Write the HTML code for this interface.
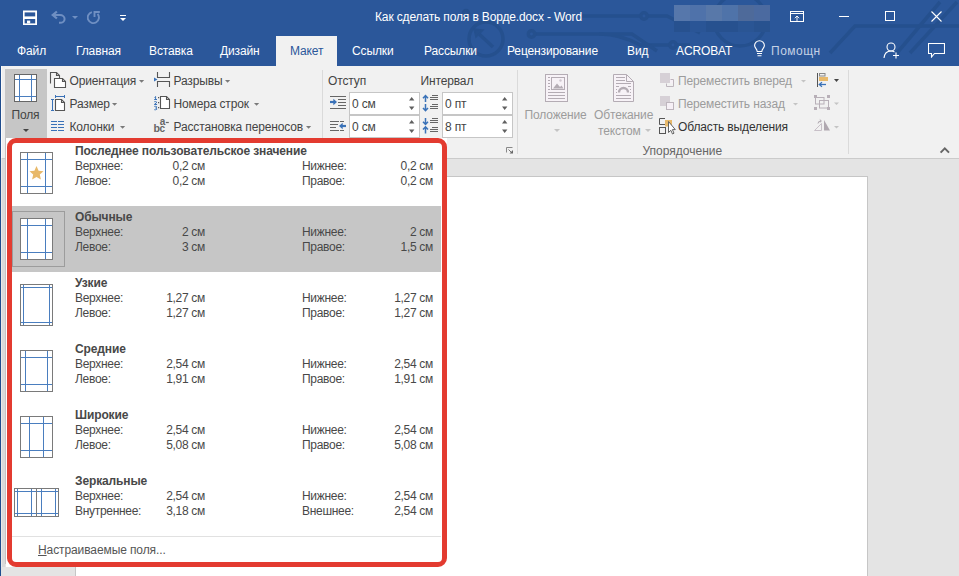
<!DOCTYPE html>
<html><head><meta charset="utf-8">
<style>
*{margin:0;padding:0;box-sizing:border-box}
html,body{width:959px;height:576px;overflow:hidden;background:#e4e4e4;font-family:"Liberation Sans",sans-serif;position:relative}
.a{position:absolute;white-space:nowrap}
#top{position:absolute;left:0;top:0;width:959px;height:66px;background:#2b579a;overflow:hidden}
.tt{position:absolute;color:#fff;font-size:12px;letter-spacing:-0.12px;top:44px;line-height:14px}
#ribbon{position:absolute;left:0;top:66px;width:959px;height:93px;background:#f1f1f1;border-bottom:1px solid #cbcbcb}
.rt{position:absolute;color:#444;font-size:12px;letter-spacing:-0.14px;line-height:14px;white-space:nowrap}
.dis{color:#9c9c9c}
.sep{position:absolute;width:1px;background:#dadada;top:70px;height:84px}
.arr{position:absolute;width:0;height:0;border-left:3px solid transparent;border-right:3px solid transparent;border-top:3px solid #666}
#page{position:absolute;left:75px;top:176px;width:793px;height:420px;background:#fff;border:1px solid #c6c6c6}
#dd{position:absolute;left:6px;top:138px;width:441px;height:429px;background:#fff;border:5px solid #e33b30;border-radius:9px;box-shadow:-1px 0 0 #cfcfcf}
.it{position:absolute;left:0;width:429px;height:66px}
.hl{background:#c6c6c6}
.dt{position:absolute;font-size:12px;letter-spacing:-0.3px;color:#484848;line-height:14px;white-space:nowrap}
.db{font-weight:bold;letter-spacing:-0.13px}
.sp{position:absolute;background:#fff;border:1px solid #c6c6c6}
</style></head><body>

<div id="top">
  <svg class="a" style="left:0;top:0" width="959" height="66">
    <g stroke="#25508e" stroke-width="3.5" fill="none">
      <circle cx="486" cy="39" r="17"/>
      <path d="M493 47L478 33"/>
      <path d="M474 29L483 30L476 37Z" fill="#25508e" stroke-width="1.5"/>
      <circle cx="466" cy="13" r="2.5"/>
      <path d="M535 34H600Q620 34 640 45H669"/>
      <circle cx="531.5" cy="34" r="3.2"/>
      <circle cx="673" cy="45" r="3.2"/>
      <path d="M676.5 45H690"/>
      <path d="M582 16H640M647.5 16H667L700 33"/>
      <circle cx="644" cy="16" r="3.2"/>
      <path d="M599 34H632L657 51"/>
      <circle cx="740" cy="20" r="26"/>
      <path d="M830 53L855 26H959"/>
      <path d="M897 53L940 2"/>
      <path d="M910 53L957 2"/>
    </g>
  </svg>
  <!-- save -->
  <svg class="a" style="left:0;top:0" width="140" height="36">
    <rect x="23" y="10.5" width="14" height="14.5" fill="#fff"/>
    <rect x="24.6" y="12.4" width="10.6" height="4" fill="#2b579a"/>
    <rect x="24.6" y="19" width="10.6" height="4.4" fill="#2b579a"/>
    <rect x="27" y="20.6" width="3.2" height="2.8" fill="#fff"/>
  </svg>
  <!-- undo -->
  <svg class="a" style="left:51px;top:10px" width="16" height="15" viewBox="0 0 16 15">
    <path d="M2.5 5 H9 A4.6 3.9 0 0 1 9 12.8 H8" fill="none" stroke="#6f8fc2" stroke-width="2"/>
    <path d="M5.9 1.5 L1.8 5 L5.9 8.5" fill="none" stroke="#6f8fc2" stroke-width="2.3"/>
  </svg>
  <div class="arr" style="left:71.5px;top:16px;border-top-color:#6f8fc2"></div>
  <!-- redo -->
  <svg class="a" style="left:87px;top:10px" width="14" height="15" viewBox="0 0 14 15">
    <path d="M4.9 2.1 A5.6 5.6 0 1 0 10.6 3.9" fill="none" stroke="#6f8fc2" stroke-width="1.9"/>
    <path d="M12.8 2 H7.5 V7" fill="none" stroke="#6f8fc2" stroke-width="1.9"/>
  </svg>
  <!-- customize -->
  <div class="a" style="left:120px;top:15px;width:6px;height:1px;background:#fff"></div>
  <div class="arr" style="left:120px;top:18px;border-top-color:#fff;border-left-width:3px;border-right-width:3px;border-top-width:3px"></div>

  <div class="a" style="left:375px;top:10px;color:#fff;font-size:12px;letter-spacing:-0.14px;line-height:14px">Как сделать поля в Ворде.docx - Word</div>

  <!-- pixelated blur -->
  <div class="a" style="left:674px;top:5px;width:96px;height:16px;display:flex">
    <div style="flex:1;background:#5677ab"></div><div style="flex:1;background:#4f72aa"></div><div style="flex:1;background:#5878a9"></div><div style="flex:1;background:#4f73a9"></div><div style="flex:1;background:#4e6a9a"></div><div style="flex:1;background:#4b6aa0"></div>
  </div>
  <div class="a" style="left:674px;top:21px;width:96px;height:11px;display:flex">
    <div style="flex:1;background:#27518f"></div><div style="flex:1;background:#2a5596"></div><div style="flex:1;background:#27518f"></div><div style="flex:1;background:#27518f"></div><div style="flex:1;background:#2a5594"></div><div style="flex:1;background:#28528f"></div>
  </div>
  <!-- window controls -->
  <svg class="a" style="left:790px;top:11px" width="14" height="11" viewBox="0 0 14 11">
    <rect x="0.5" y="0.5" width="13" height="10" fill="none" stroke="#fff"/>
    <path d="M0.5 2.5h13" stroke="#fff"/>
    <path d="M7 10V5M4.8 7.2L7 5L9.2 7.2" stroke="#fff" fill="none" stroke-width="0.9"/>
  </svg>
  <div class="a" style="left:839px;top:16px;width:10px;height:1px;background:#fff"></div>
  <div class="a" style="left:885px;top:11px;width:10px;height:10px;border:1px solid #fff"></div>
  <svg class="a" style="left:931px;top:11px" width="11" height="11" viewBox="0 0 11 11">
    <path d="M0.5 0.5L10.5 10.5M10.5 0.5L0.5 10.5" stroke="#fff" stroke-width="1.1"/>
  </svg>

  <!-- tabs -->
  <div class="tt" style="left:17px">Файл</div>
  <div class="tt" style="left:76px">Главная</div>
  <div class="tt" style="left:149px">Вставка</div>
  <div class="tt" style="left:220px">Дизайн</div>
  <div class="a" style="left:276px;top:36px;width:61px;height:30px;background:#f1f1f1"></div>
  <div class="tt" style="left:290px;color:#2b579a">Макет</div>
  <div class="tt" style="left:352px">Ссылки</div>
  <div class="tt" style="left:424px">Рассылки</div>
  <div class="tt" style="left:507px">Рецензирование</div>
  <div class="tt" style="left:627px">Вид</div>
  <div class="tt" style="left:676px">ACROBAT</div>
  <svg class="a" style="left:0;top:0" width="959" height="66">
    <path d="M757.2 51.5C757 49 754.6 47.8 754.6 45.6A4.9 4.9 0 0 1 764.4 45.6C764.4 47.8 762 49 761.8 51.5Z" fill="none" stroke="#fff" stroke-width="1.1"/>
    <path d="M757 53.5h5M757.5 55.7h4" stroke="#fff" stroke-width="1.1"/>
  </svg>
  <div class="tt" style="left:771px;color:#c5d1e5;letter-spacing:0.5px">Помощн</div>
  <svg class="a" style="left:883px;top:42px" width="17" height="17" viewBox="0 0 17 17">
    <circle cx="8" cy="5" r="4" fill="none" stroke="#fff" stroke-width="1.1"/>
    <path d="M1 16 C1.5 11 4 9 8 9 C9.5 9 10.5 9.3 11.5 10" fill="none" stroke="#fff" stroke-width="1.1"/>
    <path d="M13 10.5v6M10 13.5h6" stroke="#fff" stroke-width="1.1"/>
  </svg>
  <svg class="a" style="left:928px;top:43px" width="17" height="15" viewBox="0 0 17 15">
    <path d="M0.5 0.5h16v10h-10l-3 3.5v-3.5h-3z" fill="none" stroke="#fff" stroke-width="1.1"/>
  </svg>
</div>

<div id="ribbon"></div>
<div class="a" style="left:0;top:66px;width:1px;height:510px;background:#1f4d8e"></div>
<div class="a" style="left:1px;top:66px;width:1px;height:92px;background:#fbfbfb"></div>
<div class="a" style="left:2px;top:66px;width:3px;height:92px;background:#eeeeee"></div>

<!-- Поля -->
<div class="a" style="left:5px;top:69px;width:42px;height:69px;background:#c6c6c6"></div>
<div class="rt" style="left:11.5px;top:108px">Поля</div>
<div class="rt" style="left:69.5px;top:74px">Ориентация</div>
<div class="rt" style="left:69.5px;top:97px">Размер</div>
<div class="rt" style="left:69.5px;top:120px">Колонки</div>
<div class="rt" style="left:173.5px;top:74px">Разрывы</div>
<div class="rt" style="left:173.5px;top:97px">Номера строк</div>
<div class="rt" style="left:173.5px;top:120px">Расстановка переносов</div>
<div class="sep" style="left:322px"></div>
<div class="rt" style="left:328px;top:74px">Отступ</div>
<div class="rt" style="left:420.5px;top:74px">Интервал</div>
<div class="sp" style="left:349px;top:92px;width:71px;height:23px"></div>
<div class="sp" style="left:349px;top:115px;width:71px;height:23px"></div>
<div class="sp" style="left:442px;top:92px;width:71px;height:23px"></div>
<div class="sp" style="left:442px;top:115px;width:71px;height:23px"></div>
<div class="rt" style="left:352px;top:97px">0 см</div>
<div class="rt" style="left:352px;top:120px">0 см</div>
<div class="rt" style="left:445px;top:97px">0 пт</div>
<div class="rt" style="left:445px;top:120px">8 пт</div>
<div class="sep" style="left:517px"></div>
<div class="rt dis" style="left:524.5px;top:108px">Положение</div>
<div class="rt dis" style="left:594px;top:108px">Обтекание</div>
<div class="rt dis" style="left:598px;top:124px">текстом</div>
<div class="rt dis" style="left:678px;top:74px">Переместить вперед</div>
<div class="rt dis" style="left:678px;top:97px">Переместить назад</div>
<div class="rt" style="left:678px;top:120px;color:#333">Область выделения</div>
<div class="rt" style="left:642.5px;top:144px;color:#666;letter-spacing:0">Упорядочение</div>
<div class="sep" style="left:848px"></div>

<svg class="a" style="left:0;top:0" width="959" height="576" viewBox="0 0 959 576">
 <!-- Поля icon -->
 <rect x="14.5" y="74.5" width="22" height="27" fill="#fff" stroke="#666"/>
 <path d="M19.5 75v26M31.5 75v26M15 79.5h21M15 96.5h21" stroke="#4a7ebf"/>
 <path d="M23 129h6l-3 3z" fill="#444"/>
 <!-- orientation -->
 <g fill="none" stroke="#555" stroke-width="1.1">
  <path d="M50.5 83.5V72.5H56.5L59.5 75.5V78"/>
  <path d="M56.5 72.5V75.5H59.5"/>
  <path d="M54.5 87.5V78.5H62.5L65.5 81.5V87.5Z" fill="#fff"/>
  <path d="M62.5 78.5V81.5H65.5"/>
 </g>
 <path d="M139 80h5.2l-2.6 2.8z" fill="#7a7a7a"/>
 <!-- size -->
 <path d="M52.5 99v12M51 99.5h3M51 110.5h3M55 96.5h10M55.5 95v3M64.5 95v3" stroke="#3a72b8" fill="none"/>
 <g fill="none" stroke="#555" stroke-width="1.1">
  <path d="M55.5 110.5V99.5H61.5L64.5 102.5V110.5Z" fill="#fff"/>
  <path d="M61.5 99.5V102.5H64.5"/>
 </g>
 <path d="M112 103h5.2l-2.6 2.8z" fill="#7a7a7a"/>
 <!-- columns -->
 <path d="M51 121.5h6M51 124.5h6M51 127.5h6M51 130.5h6M58 121.5h6M58 124.5h6M58 127.5h6M58 130.5h6" stroke="#3a72b8" stroke-width="1.2"/>
 <path d="M120 126h5.2l-2.6 2.8z" fill="#7a7a7a"/>
 <!-- breaks -->
 <path d="M157.5 72V77.5H169.5V72M157.5 87V81.5H169.5V87" fill="none" stroke="#555" stroke-width="1.1"/>
 <path d="M154 77.5L157.5 79.5L154 81.5Z" fill="#3a72b8"/>
 <path d="M225 80h5.2l-2.6 2.8z" fill="#7a7a7a"/>
 <!-- line numbers -->
 <g fill="none" stroke="#3a72b8" stroke-width="1">
  <path d="M154.2 99.5h2.8M155.6 96.5v3M154.5 97.5l1.1-1"/>
  <path d="M154.3 101.7q1.4-.5 2.6.6l-2.6 2.2h2.8"/>
  <path d="M154.3 106.4q1.4-.4 2.6.5q-.2 1-1.3 1.1q1.3.2 1.3 1.2q-1.2.9-2.6.5"/>
 </g>
 <path d="M158 97h1.2v1.2h-1.2zM158 102h1.2v1.2h-1.2zM158 107h1.2v1.2h-1.2z" fill="#555"/>
 <g fill="none" stroke="#555" stroke-width="1.1">
  <path d="M160.5 108.5V96.5H166.5L169.5 99.5V108.5Z" fill="#fff"/>
  <path d="M166.5 96.5V99.5H169.5"/>
 </g>
 <path d="M254 103h5.2l-2.6 2.8z" fill="#7a7a7a"/>
 <!-- hyphenation -->
 <text x="153.6" y="132.2" font-family="Liberation Sans" font-size="11.5" fill="#666" font-weight="bold" transform="translate(153.6 0) scale(0.92 1) translate(-153.6 0)">b</text>
 <text x="159.6" y="132.2" font-family="Liberation Sans" font-size="10" fill="#666" font-weight="bold">c</text>
 <text x="159.8" y="124.6" font-family="Liberation Sans" font-size="10" fill="#666" font-weight="bold">a</text>
 <path d="M165.8 122.5h3" stroke="#666" stroke-width="1.2"/>
 <path d="M306 126h5.2l-2.6 2.8z" fill="#7a7a7a"/>

 <!-- indent left -->
 <path d="M330 96.5h16M338 99.5h8M338 102.5h8M338 105.5h8M330 108.5h16" stroke="#666"/>
 <path d="M330 102h4.5" stroke="#3a72b8" stroke-width="2.2"/>
 <path d="M333.3 98.7L337 102L333.3 105.3Z" fill="#3a72b8"/>
 <!-- indent right -->
 <path d="M330 121.5h9M340 121.5h4M330 124.5h8M330 127.5h6M330 130.5h9M340 130.5h4" stroke="#666"/>
 <path d="M346 126h-4.5" stroke="#3a72b8" stroke-width="2.2"/>
 <path d="M342.7 122.7L339 126L342.7 129.3Z" fill="#3a72b8"/>
 <!-- spin arrows -->
 <path d="M409 100.5h5.4l-2.7-3.4zM409 106.6h5.4l-2.7 3.4zM409 123.5h5.4l-2.7-3.4zM409 129.6h5.4l-2.7 3.4zM502 100.5h5.4l-2.7-3.4zM502 106.6h5.4l-2.7 3.4zM502 123.5h5.4l-2.7-3.4zM502 129.6h5.4l-2.7 3.4z" fill="#606060"/>
 <!-- spacing before -->
 <path d="M425.5 96v6M423 98.3L425.5 95.6L428 98.3M425.5 104v6.5M423 108L425.5 110.7L428 108" stroke="#3a72b8" stroke-width="1.5" fill="none"/>
 <path d="M432 95.5h6M430 97.5h8M430 99.5h8M432 104.5h6M430 106.5h8M430 108.5h8" stroke="#666"/>
 <!-- spacing after -->
 <path d="M425.5 118v6.5M423 121.8L425.5 124.5L428 121.8M425.5 127v6.5M423 129.5L425.5 126.8L428 129.5" stroke="#3a72b8" stroke-width="1.5" fill="none"/>
 <path d="M432 118.5h6M430 120.5h8M430 122.5h8M432 127.5h6M430 129.5h8M430 131.5h8" stroke="#666"/>
 <!-- dialog launcher -->
 <path d="M506.5 152.5V147.5H512.5" fill="none" stroke="#888"/>
 <path d="M508.5 149.5L512 153" fill="none" stroke="#777"/><path d="M513 150v3.5H509.5Z" fill="#666"/>

 <!-- position -->
 <rect x="545.5" y="74.5" width="22" height="27" fill="#f7f2f7" stroke="#b4acb4"/>
 <path d="M548 77.5h2M548 80.5h2M548 83.5h2M548 86.5h2M548 89.5h2M548 92.5h17M548 95.5h17M548 98.5h17" stroke="#b4acb4"/>
 <rect x="551.5" y="77.5" width="13" height="12" fill="none" stroke="#b4acb4"/>
 <path d="M553 88.5L557 83.5L560 87L561.5 85.5L563.5 88.5Z" fill="#b4acb4"/>
 <circle cx="560.5" cy="80.5" r="1.2" fill="#cfc7cf"/>
 <path d="M554 129h6l-3 3z" fill="#c4c4c4"/>
 <!-- wrap text -->
 <path d="M613.5 74.5H626.5L633.5 81.5V101.5H613.5Z" fill="#f7f2f7" stroke="#b4acb4"/>
 <path d="M626.5 74.5V81.5H633.5" fill="none" stroke="#b4acb4"/>
 <path d="M616 77.5h9M616 80.5h9M616 83.5h15M616 86.5h3M628 86.5h3M616 89.5h1M630 89.5h1M616 92.5h1M630 92.5h1M616 95.5h15M616 98.5h15" stroke="#b4acb4"/>
 <path d="M619 92.5A4.5 4.5 0 0 1 628 92.5" fill="none" stroke="#b4acb4" stroke-width="2.4"/>
 <path d="M645 129h6l-3 3z" fill="#c4c4c4"/>
 <!-- bring forward -->
 <rect x="660" y="73" width="10" height="10" fill="#d6d0d6"/>
 <path d="M666 83.5h7.5v-5h-3.5v5" fill="#f6f0f6"/>
 <path d="M670.5 79.5h3V86.5H666.5V83.5" fill="none" stroke="#bdb5bd"/>
 <path d="M801 80h5l-2.5 2.5z" fill="#c4c4c4"/>
 <!-- send backward -->
 <rect x="660" y="96" width="10" height="10" fill="#d6d0d6"/>
 <rect x="666.5" y="102.5" width="7" height="7" fill="#f6f0f6" stroke="#bdb5bd"/>
 <path d="M793 103h5l-2.5 2.5z" fill="#c4c4c4"/>
 <!-- selection pane -->
 <path d="M665 118.5H659.5V124.5H665" fill="none" stroke="#555"/>
 <rect x="659.5" y="127.5" width="6" height="6" fill="none" stroke="#555"/>
 <rect x="665" y="120" width="7" height="6.5" fill="#e8b96a"/>
 <path d="M668.5 121.5V132.5L670.8 130.3L672.5 134L674 133.2L672.4 129.6H675.3Z" fill="#fff" stroke="#555" stroke-width="0.9" stroke-linejoin="round"/>
 <!-- align -->
 <path d="M817.5 73v14" stroke="#555"/>
 <rect x="819.5" y="73.5" width="5.5" height="2.5" fill="none" stroke="#888"/>
 <rect x="819" y="77" width="9" height="4" fill="#e8b96a"/>
 <path d="M826 84.5h-6" stroke="#3a72b8" stroke-width="1.3"/>
 <path d="M822 82.3L819.3 84.5L822 86.7" fill="none" stroke="#3a72b8" stroke-width="1.3"/>
 <path d="M834 79h5l-2.5 3z" fill="#444"/>
 <!-- group -->
 <path d="M814 95h3v3h-3zM827 95h3v3h-3zM814 107h3v3h-3zM827 107h3v3h-3z" fill="#b8b0b8"/>
 <rect x="815.5" y="97.5" width="8.5" height="6.5" fill="none" stroke="#b8b0b8"/>
 <rect x="819.5" y="100.5" width="9" height="7.5" fill="none" stroke="#b8b0b8"/>
 <path d="M834 102.5h5l-2.5 2.5z" fill="#c4c4c4"/>
 <!-- rotate -->
 <path d="M814.5 130.5L821.5 123.5V130.5Z" fill="none" stroke="#c8c0c8"/>
 <path d="M824 120V130.5H830Z" fill="#b0a8b0"/>
 <path d="M818 123.5Q818 121 821 121M819.8 119.6L821.4 121L819.8 122.4" fill="none" stroke="#b0a8b0"/>
 <path d="M834 126h5l-2.5 2.5z" fill="#c4c4c4"/>
 <!-- collapse -->
 <path d="M940.6 152.6L944.8 148.4L949 152.6" fill="none" stroke="#666" stroke-width="2"/>
</svg>

<!-- document page -->
<div id="page"></div>

<!-- dropdown -->
<div class="a" style="left:1px;top:158px;width:1px;height:409px;background:#ebe9e6"></div>
<div class="a" style="left:2px;top:159px;width:3px;height:408px;background:#d9d9d9"></div>
<div class="a" style="left:5px;top:138px;width:1px;height:426px;background:#c3c3c3"></div>
<div class="a" style="left:6px;top:138px;width:441px;height:429px;background:#fff"></div>
<div class="a" style="left:12px;top:206px;width:429px;height:66px;background:#c6c6c6"></div>
<div class="a" style="left:12px;top:211px;width:53px;height:56px;border:1px solid #9c9c9c"></div>
<svg class="a" style="left:20px;top:152px" width="33" height="42" viewBox="0 0 33 42"><rect x="0.5" y="0.5" width="32" height="41" fill="#fff" stroke="#7a7a7a"/><path d="M7.5 1v40M25.5 1v40M1 7.5h31M1 34.5h31" stroke="#4a7ebf"/><path d="M16.5 14 L18.6 18.8 L23.5 19.3 L19.8 22.6 L20.9 27.5 L16.5 25 L12.1 27.5 L13.2 22.6 L9.5 19.3 L14.4 18.8Z" fill="#e8b96a"/></svg>
<div class="dt db" style="left:75px;top:144px">Последнее пользовательское значение</div>
<div class="dt" style="left:75px;top:159px">Верхнее:</div>
<div class="dt" style="left:75px;top:174px">Левое:</div>
<div class="dt" style="left:145px;top:159px;width:60px;text-align:right">0,2 см</div>
<div class="dt" style="left:145px;top:174px;width:60px;text-align:right">0,2 см</div>
<div class="dt" style="left:302px;top:159px">Нижнее:</div>
<div class="dt" style="left:302px;top:174px">Правое:</div>
<div class="dt" style="left:373px;top:159px;width:60px;text-align:right">0,2 см</div>
<div class="dt" style="left:373px;top:174px;width:60px;text-align:right">0,2 см</div>
<svg class="a" style="left:20px;top:218px" width="33" height="42" viewBox="0 0 33 42"><rect x="0.5" y="0.5" width="32" height="41" fill="#fff" stroke="#7a7a7a"/><path d="M7.5 1v40M25.5 1v40M1 7.5h31M1 34.5h31" stroke="#4a7ebf"/></svg>
<div class="dt db" style="left:75px;top:210px">Обычные</div>
<div class="dt" style="left:75px;top:225px">Верхнее:</div>
<div class="dt" style="left:75px;top:240px">Левое:</div>
<div class="dt" style="left:145px;top:225px;width:60px;text-align:right">2 см</div>
<div class="dt" style="left:145px;top:240px;width:60px;text-align:right">3 см</div>
<div class="dt" style="left:302px;top:225px">Нижнее:</div>
<div class="dt" style="left:302px;top:240px">Правое:</div>
<div class="dt" style="left:373px;top:225px;width:60px;text-align:right">2 см</div>
<div class="dt" style="left:373px;top:240px;width:60px;text-align:right">1,5 см</div>
<svg class="a" style="left:20px;top:284px" width="33" height="42" viewBox="0 0 33 42"><rect x="0.5" y="0.5" width="32" height="41" fill="#fff" stroke="#7a7a7a"/><path d="M3.5 1v40M29.5 1v40M1 3.5h31M1 38.5h31" stroke="#4a7ebf"/></svg>
<div class="dt db" style="left:75px;top:276px">Узкие</div>
<div class="dt" style="left:75px;top:291px">Верхнее:</div>
<div class="dt" style="left:75px;top:306px">Левое:</div>
<div class="dt" style="left:145px;top:291px;width:60px;text-align:right">1,27 см</div>
<div class="dt" style="left:145px;top:306px;width:60px;text-align:right">1,27 см</div>
<div class="dt" style="left:302px;top:291px">Нижнее:</div>
<div class="dt" style="left:302px;top:306px">Правое:</div>
<div class="dt" style="left:373px;top:291px;width:60px;text-align:right">1,27 см</div>
<div class="dt" style="left:373px;top:306px;width:60px;text-align:right">1,27 см</div>
<svg class="a" style="left:20px;top:350px" width="33" height="42" viewBox="0 0 33 42"><rect x="0.5" y="0.5" width="32" height="41" fill="#fff" stroke="#7a7a7a"/><path d="M5.5 1v40M27.5 1v40M1 7.5h31M1 34.5h31" stroke="#4a7ebf"/></svg>
<div class="dt db" style="left:75px;top:342px">Средние</div>
<div class="dt" style="left:75px;top:357px">Верхнее:</div>
<div class="dt" style="left:75px;top:372px">Левое:</div>
<div class="dt" style="left:145px;top:357px;width:60px;text-align:right">2,54 см</div>
<div class="dt" style="left:145px;top:372px;width:60px;text-align:right">1,91 см</div>
<div class="dt" style="left:302px;top:357px">Нижнее:</div>
<div class="dt" style="left:302px;top:372px">Правое:</div>
<div class="dt" style="left:373px;top:357px;width:60px;text-align:right">2,54 см</div>
<div class="dt" style="left:373px;top:372px;width:60px;text-align:right">1,91 см</div>
<svg class="a" style="left:20px;top:416px" width="33" height="42" viewBox="0 0 33 42"><rect x="0.5" y="0.5" width="32" height="41" fill="#fff" stroke="#7a7a7a"/><path d="M9.5 1v40M23.5 1v40M1 7.5h31M1 34.5h31" stroke="#4a7ebf"/></svg>
<div class="dt db" style="left:75px;top:408px">Широкие</div>
<div class="dt" style="left:75px;top:423px">Верхнее:</div>
<div class="dt" style="left:75px;top:438px">Левое:</div>
<div class="dt" style="left:145px;top:423px;width:60px;text-align:right">2,54 см</div>
<div class="dt" style="left:145px;top:438px;width:60px;text-align:right">5,08 см</div>
<div class="dt" style="left:302px;top:423px">Нижнее:</div>
<div class="dt" style="left:302px;top:438px">Правое:</div>
<div class="dt" style="left:373px;top:423px;width:60px;text-align:right">2,54 см</div>
<div class="dt" style="left:373px;top:438px;width:60px;text-align:right">5,08 см</div>
<svg class="a" style="left:14px;top:488px" width="45" height="29" viewBox="0 0 45 29"><rect x="0.5" y="0.5" width="44" height="28" fill="#fff" stroke="#7a7a7a"/><path d="M1 3.5h43M1 25.5h43M3.5 1v27M17.5 1v27M27.5 1v27M41.5 1v27" stroke="#4a7ebf"/><path d="M22.5 0v29" stroke="#7a7a7a"/></svg>
<div class="dt db" style="left:75px;top:474px">Зеркальные</div>
<div class="dt" style="left:75px;top:489px">Верхнее:</div>
<div class="dt" style="left:75px;top:504px">Внутреннее:</div>
<div class="dt" style="left:145px;top:489px;width:60px;text-align:right">2,54 см</div>
<div class="dt" style="left:145px;top:504px;width:60px;text-align:right">3,18 см</div>
<div class="dt" style="left:302px;top:489px">Нижнее:</div>
<div class="dt" style="left:302px;top:504px">Внешнее:</div>
<div class="dt" style="left:373px;top:489px;width:60px;text-align:right">2,54 см</div>
<div class="dt" style="left:373px;top:504px;width:60px;text-align:right">2,54 см</div>
<div class="a" style="left:12px;top:536px;width:429px;height:1px;background:#e1e1e1"></div>
<div class="dt" style="left:38px;top:542.5px;letter-spacing:-0.1px;color:#555"><u>Н</u>астраиваемые поля...</div>
<div class="a" style="left:7px;top:138px;width:440px;height:429px;border:5px solid #e33b30;border-radius:9px"></div>
</body></html>
